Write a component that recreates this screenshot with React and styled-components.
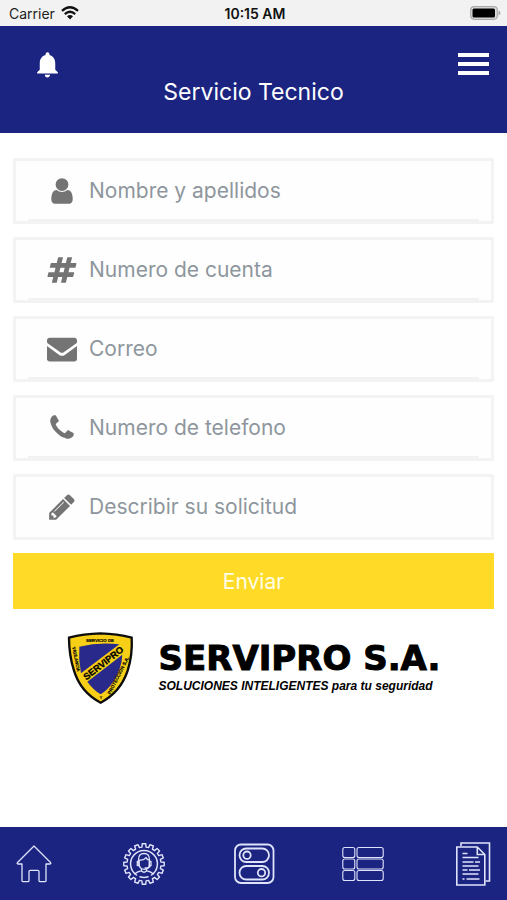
// src/screens/TechnicalService.jsx
import React, { useState } from 'react'
import styled, { createGlobalStyle } from 'styled-components'
import { MdNotifications } from 'react-icons/md'

const GlobalStyle = createGlobalStyle`
  * {
    box-sizing: border-box;
  }

  body {
    margin: 0;
    background: #fff;
    font-family: Inter, 'Liberation Sans', sans-serif;
  }
`

const Screen = styled.div`
  display: flex;
  flex-direction: column;
  min-height: 100vh;
`

const StatusBar = styled.div`
  display: grid;
  grid-template-columns: 1fr auto 1fr;
  align-items: center;
  height: 26px;
  padding: 0 6px 0 9px;
  background: #f2f2f2;
  color: #222;
  font-size: 14px;
`

const Carrier = styled.div`
  display: flex;
  align-items: center;
  gap: 6px;
`

const Clock = styled.time`
  color: #111;
  font-weight: 600;
`

const BatterySlot = styled.div`
  display: flex;
  justify-content: flex-end;
`

const Header = styled.header`
  padding: 22px 18px 28px;
  background: #1b2480;
  color: #fff;
`

const HeaderActions = styled.div`
  display: flex;
  align-items: center;
  justify-content: space-between;
  height: 32px;
  padding-left: 14px;
`

const IconButton = styled.button`
  display: flex;
  padding: 0;
  border: none;
  background: none;
  color: inherit;
  cursor: pointer;
`

const Title = styled.h1`
  margin: 0;
  font-size: 23px;
  font-weight: 400;
  line-height: 25px;
  text-align: center;
`

const Main = styled.main`
  flex: 1;
  padding: 25px 13px;
`

const Form = styled.form`
  display: flex;
  flex-direction: column;
  gap: 13px;
`

const Field = styled.label`
  display: flex;
  height: 66px;
  padding: 0 12px;
  border: 3px solid #f3f3f3;
  border-radius: 2px;
  background: #fefefe;
  color: #747474;
`

const FieldInner = styled.span`
  display: flex;
  flex: 1;
  align-items: center;
  gap: 12px;
  min-width: 0;
  padding: ${props => (props.$underline ? '2px' : '0')} 0 0 19px;
  border-bottom: ${props => (props.$underline ? '2px solid #f2f2f2' : 'none')};
`

const Input = styled.input`
  flex: 1;
  min-width: 0;
  padding: 0;
  border: none;
  outline: none;
  background: none;
  color: #333;
  font-family: inherit;
  font-size: 21px;
  line-height: 28px;

  &::placeholder {
    color: #8e969d;
    opacity: 1;
  }
`

const SubmitButton = styled.button`
  height: 56px;
  border: none;
  background: #ffdb28;
  color: #fffce8;
  font-family: inherit;
  font-size: 21px;
  cursor: pointer;
`

const Brand = styled.div`
  display: flex;
  align-items: center;
  justify-content: center;
  gap: 25px;
  margin-top: 23px;
`

const BrandText = styled.div`
  padding-bottom: 5px;
  color: #000;
  font-family: 'Liberation Sans', Arial, sans-serif;
`

const BrandName = styled.div`
  font-family: 'DejaVu Sans', sans-serif;
  font-size: 34px;
  font-weight: 700;
  line-height: 40px;
  -webkit-text-stroke: 1px #000;
`

const Tagline = styled.div`
  font-size: 12px;
  font-style: italic;
  font-weight: 700;
  line-height: 16px;
`

const BottomNav = styled.nav`
  display: flex;
  align-items: center;
  justify-content: space-between;
  height: 73px;
  padding: 0 13px;
  background: #1b2480;
`

const NavLink = styled.a`
  display: flex;
  color: #dfe3fb;
`

const NavSvg = styled.svg`
  width: 42px;
  height: 44px;
  fill: none;
  stroke: currentColor;
  stroke-width: ${props => props.$weight || 1.3};
  stroke-linejoin: round;
  stroke-linecap: round;
`

const icons = {
  user: 'M1536 1399q0 109-62.500 187t-150.500 78h-854q-88 0-150.500-78t-62.500-187q0-85 8.500-160.500t31.500-152 58.500-131 94-89 134.500-34.500q131 128 313 128t313-128q76 0 134.500 34.500t94 89 58.500 131 31.500 152 8.500 160.500zm-256-887q0 159-112.500 271.500t-271.500 112.500-271.500-112.500-112.500-271.500 112.500-271.500 271.500-112.500 271.500 112.500 112.500 271.500z',
  hashtag: 'M991 1024l64-256h-254l-64 256h254zm768-504l-56 224q-7 24-31 24h-327l-64 256h311q15 0 25 12 10 14 6 28l-56 224q-5 24-31 24h-327l-81 328q-7 24-32 24h-224q-16 0-26-12-9-12-6-28l78-312h-254l-81 328q-7 24-32 24h-225q-15 0-25-12-9-12-6-28l78-312h-311q-15 0-25-12-9-12-6-28l56-224q7-24 31-24h327l64-256h-311q-15 0-25-12-10-14-6-28l56-224q5-24 31-24h327l81-328q7-24 32-24h224q15 0 25 12 9 12 6 28l-78 312h254l81-328q7-24 32-24h224q15 0 25 12 9 12 6 28l-78 312h311q15 0 25 12 9 12 6 28z',
  envelope: 'M0 388q0-66 47-113t113-47h1472q66 0 113 47t47 113v76q0 60-55 103l-760 545q-81 52-162 0l-760-545q-55-43-55-103zM0 720l730 530q166 100 332 0l730-530v770q0 66-47 113t-113 47h-1472q-66 0-113-47t-47-113z',
  phone: 'M1600 1240q0 27-10 70.500t-21 68.500q-21 50-122 106-94 51-186 51-27 0-53-3.500t-57.500-12.500-47-14.500-55.500-20.500-49-18q-98-35-175-83-127-79-264-216t-216-264q-48-77-83-175-3-9-18-49t-20.500-55.500-14.500-47-12.500-57.500-3.500-53q0-92 51-186 56-101 106-122 25-11 68.500-21t70.500-10q14 0 21 3 18 6 53 76 11 19 30 54t35 63.500 31 53.500q3 4 17.500 25t21.500 35.500 7 28.500q0 20-28.500 50t-62 55-62 53-28.500 46q0 9 5 22.500t8.500 20.500 14 24 11.500 19q76 137 174 235t235 174q2 1 19 11.500t24 14 20.500 8.500 22.500 5q18 0 46-28.500t53-62 55-62 50-28.500q14 0 28.500 7t35.500 21.500 25 17.500q25 15 53.500 31t63.500 35 54 30q70 35 76 53 3 7 3 21z',
  pencil: 'M491 1536l91-91-235-235-91 91v107h128v128h107zm523-928q0-22-22-22-10 0-17 7l-542 542q-7 7-7 17 0 22 22 22 10 0 17-7l542-542q7-7 7-17zm-54-192l416 416-832 832h-416v-416zm683 96q0 53-37 90l-166 166-416-416 166-165q36-38 90-38 53 0 91 38l235 234q37 39 37 91z',
}

const fields = [
  { id: 'name', label: 'Nombre y apellidos', icon: 'user', type: 'text' },
  { id: 'account', label: 'Numero de cuenta', icon: 'hashtag', type: 'text' },
  { id: 'email', label: 'Correo', icon: 'envelope', type: 'email' },
  { id: 'phone', label: 'Numero de telefono', icon: 'phone', type: 'tel' },
  { id: 'request', label: 'Describir su solicitud', icon: 'pencil', type: 'text' },
]

const FieldIcon = ({ name }) => (
  <svg width="30" height="30" viewBox="0 0 1792 1792" fill="currentColor" aria-hidden="true">
    <path d={icons[name]} />
  </svg>
)

const Wifi = () => (
  <svg width="18" height="14" viewBox="0 0 18 14" fill="none" stroke="#111" strokeWidth="2.3" aria-hidden="true">
    <path d="M1 4.800Q9-2.200 17 4.800" />
    <path d="M3.800 8.100Q9 3.500 14.200 8.100" />
    <path d="M6 10.300Q9 7.700 12 10.300L9 13.500z" fill="#111" stroke="none" />
  </svg>
)

const Battery = () => (
  <svg width="31" height="14" viewBox="0 0 31 14" aria-hidden="true">
    <rect x="0.700" y="0.700" width="26.600" height="12.600" rx="3.500" fill="#ddd" stroke="#aaa" strokeWidth="1.200" />
    <rect x="2.500" y="2.500" width="22.500" height="9" rx="1.500" fill="#000" />
    <path d="M28.500 4.500q2 .8 2 2.500t-2 2.500z" fill="#aaa" />
  </svg>
)

const MenuIcon = () => (
  <svg width="31" height="22" viewBox="0 0 31 22" fill="currentColor" aria-hidden="true">
    <path d="M0 0h31v4H0zM0 9h31v4H0zM0 18h31v4H0z" />
  </svg>
)

const Shield = () => (
  <svg width="67" height="72" viewBox="50 36 201 216" fontFamily="Liberation Sans, Arial, sans-serif" fontWeight="700" aria-hidden="true">
    <path
      d="M56 53Q100 41 150 40Q200 41 244 53Q247 105 232 152Q211 216 151 248Q91 217 71 152Q56 105 56 53z"
      fill="#f7cf16"
      stroke="#0c0c0c"
      strokeWidth="7"
    />
    <path d="M87 80Q145 66 207 73L92 160Q84 120 87 80z" fill="#29298c" />
    <path d="M216 104Q214 145 190 184Q172 211 151 223Q126 207 111 185z" fill="#29298c" />
    <text transform="translate(165 137) rotate(-38)" textAnchor="middle" fontSize="28" stroke="#000">SERVIPRO</text>
    <text x="149" y="66" textAnchor="middle" fontSize="13" stroke="#000" strokeWidth="0.500">SERVICIO DE</text>
    <text transform="translate(66 82) rotate(79)" fontSize="13" stroke="#000" strokeWidth="0.500">VIGILANCIA</text>
    <text transform="translate(180 224) rotate(-63)" fontSize="14" stroke="#000" strokeWidth="0.500">PROTECCION S.A.</text>
    <text x="152" y="238" textAnchor="middle" fontSize="13">Y</text>
  </svg>
)

const HomeIcon = () => (
  <NavSvg viewBox="0 0 42 44" aria-hidden="true">
    <path d="M21 4L4.500 20.500q-1 1.500.5 1.500h4v16.500q0 1.200 1.200 1.200h4.600q1.200 0 1.200-1.200V29.500q0-1.200 1.200-1.200h7.600q1.200 0 1.200 1.200v9q0 1.200 1.200 1.200h4.600q1.200 0 1.200-1.200V22h4q1.500 0 .5-1.500z" />
  </NavSvg>
)

// sixteen teeth, rim at radius 17
const gearPath = () => {
  const points = []
  for (let i = 0; i < 16; i++) {
    [[-7, 17], [-5, 20.3], [5, 20.3], [7, 17]].forEach(([offset, radius]) => {
      const angle = ((i * 22.5 + offset) * Math.PI) / 180
      points.push(`${(21 + radius * Math.sin(angle)).toFixed(2)} ${(22 - radius * Math.cos(angle)).toFixed(2)}`)
    })
  }
  return `M${points.join('L')}z`
}

const SupportIcon = () => (
  <NavSvg viewBox="0 0 42 44" aria-hidden="true">
    <path d={gearPath()} strokeWidth="1.400" />
    <path d="M13.500 33A13.400 13.400 0 1 1 28.500 33M17 34.800q4 1.200 8 0" strokeWidth="1.500" />
    <path d="M15.500 20.500v-3q0-6 5.500-6t5.500 6v3M16 18q5 .5 7-2.500q1 2.500 3.500 2.500v4q0 5.300-5 5.300t-5.500-5.300z" />
    <path d="M14.300 19.500h1.700v4h-1.700zM26.300 19.500h1.700v4h-1.700zM27.300 23.500q0 2.500-5.300 2.500" />
    <path d="M18.500 27.300v1.500q-5 1-6.500 3M23.500 27.300v1.500q5 1 6.500 3M18.500 29q2.500 2.500 5 0" />
  </NavSvg>
)

const ControlsIcon = () => (
  <NavSvg viewBox="0 0 42 44" $weight={1.8} aria-hidden="true">
    <rect x="2" y="2.500" width="38.500" height="38.500" rx="6" />
    <rect x="6.500" y="6.500" width="29.500" height="13.500" rx="6.700" />
    <rect x="6.500" y="24" width="29.500" height="13.500" rx="6.700" />
    <circle cx="14" cy="13.200" r="3.700" />
    <circle cx="28.500" cy="30.700" r="3.700" />
  </NavSvg>
)

const ListIcon = () => (
  <NavSvg viewBox="0 0 42 44" $weight={1.1} aria-hidden="true">
    {[5.5, 17, 28.5].map(y => (
      <g key={y}>
        <rect x="0.800" y={y} width="12" height="10" rx="2" />
        <rect x="15" y={y} width="26.200" height="10" rx="2" />
      </g>
    ))}
  </NavSvg>
)

const DocumentIcon = () => (
  <NavSvg viewBox="0 0 42 44" aria-hidden="true">
    <path d="M9 3.500V1h28.500v38H34" strokeWidth="1.600" strokeLinejoin="miter" />
    <path d="M4.800 5h20.500l7.500 7.500V43h-28zM25.300 5v7.500h7.500" strokeWidth="1.600" strokeLinejoin="miter" />
    <path
      d="M10.500 11.500h5M10.500 15.500h16M10.500 20h11M23 20h5M10.500 24h16M10.500 28h5M17 28h11M10.500 32h16M10.500 37h2M14.500 37h13"
      strokeWidth="1.600"
      strokeLinecap="butt"
    />
  </NavSvg>
)

const navItems = [
  { id: 'home', label: 'Inicio', Icon: HomeIcon },
  { id: 'support', label: 'Servicio tecnico', Icon: SupportIcon },
  { id: 'controls', label: 'Controles', Icon: ControlsIcon },
  { id: 'list', label: 'Lista', Icon: ListIcon },
  { id: 'documents', label: 'Documentos', Icon: DocumentIcon },
]

const TechnicalService = () => {
  const [values, setValues] = useState({})

  const handleChange = (e) => {
    setValues({ ...values, [e.target.name]: e.target.value })
  }

  return (
    <Screen>
      <GlobalStyle />
      <StatusBar>
        <Carrier>
          Carrier
          <Wifi />
        </Carrier>
        <Clock>10:15 AM</Clock>
        <BatterySlot>
          <Battery />
        </BatterySlot>
      </StatusBar>

      <Header>
        <HeaderActions>
          <IconButton type="button" aria-label="Notificaciones">
            <MdNotifications size={31} />
          </IconButton>
          <IconButton type="button" aria-label="Menu">
            <MenuIcon />
          </IconButton>
        </HeaderActions>
        <Title>Servicio Tecnico</Title>
      </Header>

      <Main>
        <Form onSubmit={e => e.preventDefault()}>
          {fields.map((field, idx) => (
            <Field key={field.id} htmlFor={field.id}>
              <FieldInner $underline={idx < fields.length - 1}>
                <FieldIcon name={field.icon} />
                <Input
                  id={field.id}
                  name={field.id}
                  type={field.type}
                  placeholder={field.label}
                  aria-label={field.label}
                  value={values[field.id] || ''}
                  onChange={handleChange}
                />
              </FieldInner>
            </Field>
          ))}
          <SubmitButton type="submit">Enviar</SubmitButton>
        </Form>

        <Brand>
          <Shield />
          <BrandText>
            <BrandName>SERVIPRO S.A.</BrandName>
            <Tagline>SOLUCIONES INTELIGENTES para tu seguridad</Tagline>
          </BrandText>
        </Brand>
      </Main>

      <BottomNav>
        {navItems.map(({ id, label, Icon }) => (
          <NavLink key={id} href={`#${id}`} aria-label={label}>
            <Icon />
          </NavLink>
        ))}
      </BottomNav>
    </Screen>
  )
}

export default TechnicalService
